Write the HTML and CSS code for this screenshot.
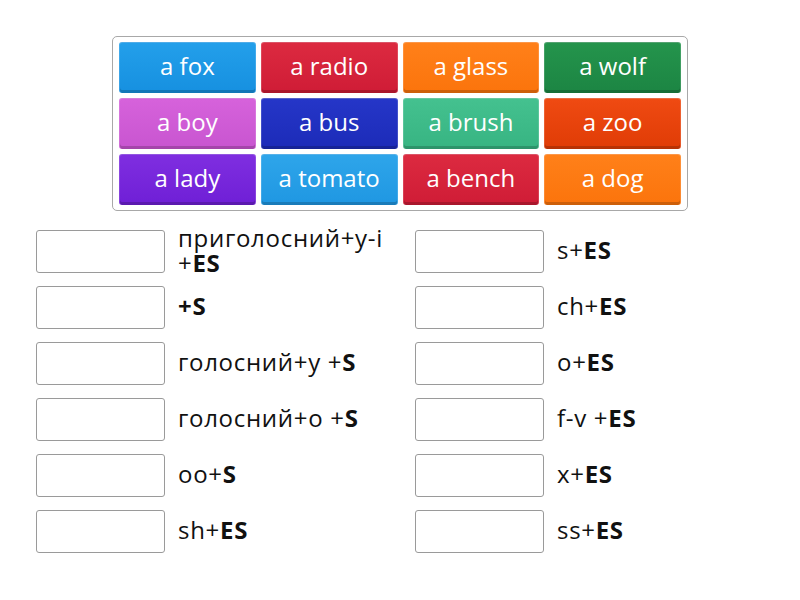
FILE: index.html
```html
<!DOCTYPE html>
<html>
<head>
<meta charset="utf-8">
<link rel="stylesheet" href="styles.css">
</head>
<body>
<div class="page">
  <div class="panel">
    <div class="tile c-blue">a fox</div>
    <div class="tile c-red">a radio</div>
    <div class="tile c-orange">a glass</div>
    <div class="tile c-green">a wolf</div>
    <div class="tile c-orchid">a boy</div>
    <div class="tile c-navy">a bus</div>
    <div class="tile c-teal">a brush</div>
    <div class="tile c-vermil">a zoo</div>
    <div class="tile c-purple">a lady</div>
    <div class="tile c-sky">a tomato</div>
    <div class="tile c-red">a bench</div>
    <div class="tile c-orange">a dog</div>
  </div>
  <div class="targets">
    <div class="row"><div class="box"></div><div class="label">приголосний+у-і<br>+<b>ES</b></div></div>
    <div class="row"><div class="box"></div><div class="label">s+<b>ES</b></div></div>
    <div class="row"><div class="box"></div><div class="label"><b>+S</b></div></div>
    <div class="row"><div class="box"></div><div class="label">ch+<b>ES</b></div></div>
    <div class="row"><div class="box"></div><div class="label">голосний+у +<b>S</b></div></div>
    <div class="row"><div class="box"></div><div class="label">o+<b>ES</b></div></div>
    <div class="row"><div class="box"></div><div class="label">голосний+о +<b>S</b></div></div>
    <div class="row"><div class="box"></div><div class="label">f-v +<b>ES</b></div></div>
    <div class="row"><div class="box"></div><div class="label">oo+<b>S</b></div></div>
    <div class="row"><div class="box"></div><div class="label">x+<b>ES</b></div></div>
    <div class="row"><div class="box"></div><div class="label">sh+<b>ES</b></div></div>
    <div class="row"><div class="box"></div><div class="label">ss+<b>ES</b></div></div>
  </div>
</div>
</body>
</html>
```
FILE: styles.css
```css
html, body {
  margin: 0;
  background: #fff;
}
body {
  font-family: "Open Sans", "Lato", "DejaVu Sans", sans-serif;
  color: #111;
}
.page {
  padding-top: 36px;
}
.panel {
  margin-left: 112px;
  width: 576px;
  box-sizing: border-box;
  border: 1px solid #a8a8a8;
  border-radius: 5px;
  padding: 5px 6px 5px 6px;
  display: grid;
  grid-template-columns: repeat(4, 1fr);
  gap: 5px 5px;
}
.tile {
  height: 51px;
  box-sizing: border-box;
  border-radius: 3px;
  color: #fff;
  font-size: 24px;
  display: flex;
  align-items: center;
  justify-content: center;
  padding-bottom: 5px;
  border-top: 1px solid rgba(255,255,255,0.25);
  border-left: 1px solid rgba(255,255,255,0.15);
  border-right: 1px solid rgba(255,255,255,0.15);
  box-shadow: inset 0 -3px 0 rgba(0,0,0,0.18);
}
.c-blue { background: linear-gradient(#239fea, #1690e0); }
.c-red { background: linear-gradient(#dc2a40, #cf1c36); }
.c-orange { background: linear-gradient(#ff8019, #fb740c); }
.c-green { background: linear-gradient(#24944c, #1c8543); }
.c-orchid { background: linear-gradient(#d662db, #c855d0); }
.c-navy { background: linear-gradient(#2536c8, #1c2bb8); }
.c-teal { background: linear-gradient(#44c18f, #37b482); }
.c-vermil { background: linear-gradient(#ef4a12, #e03c06); }
.c-purple { background: linear-gradient(#7f2ee0, #6f1fd6); }
.c-sky { background: linear-gradient(#2ea5ea, #1f97e2); }
.targets {
  margin-top: 19px;
  margin-left: 36px;
  display: grid;
  grid-template-columns: 379px 379px;
  row-gap: 13px;
}
.row {
  display: flex;
  align-items: center;
  height: 43px;
}
.box {
  flex: none;
  width: 129px;
  height: 43px;
  box-sizing: border-box;
  border: 1px solid #9a9a9a;
  border-radius: 3px;
  background: #fff;
}
.label {
  margin-left: 13px;
  font-size: 24px;
  letter-spacing: 0.7px;
  line-height: 25px;
  padding-bottom: 4px;
  color: #111;
}
.label b {
  font-weight: 700;
}
```
